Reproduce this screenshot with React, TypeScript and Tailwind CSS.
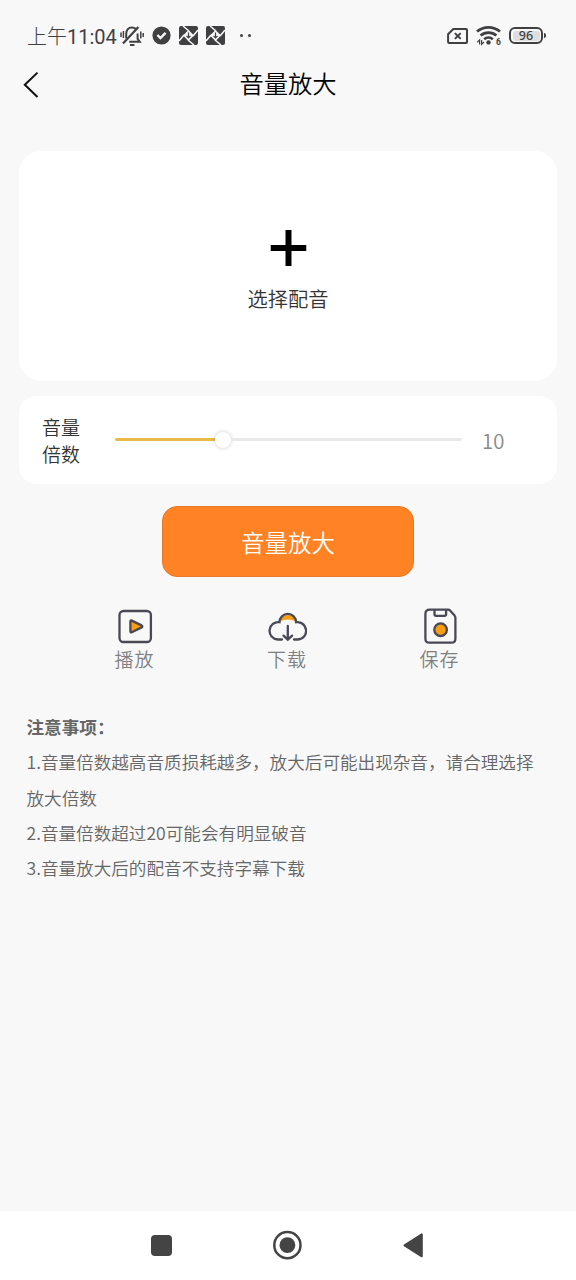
import React from "react";

const INK = "#404043";

function MutedBell() {
  return (
    <svg className="ml-[4px] h-[22px] w-[24px]" viewBox="0 0 24 22" fill="none" stroke={INK} strokeWidth="2">
      <path d="M6.2 13.6V9C6.2 5.2 8.5 2.4 12 2.4c2 0 3.5.8 4.5 2.2M17.6 8.6v5.2l2.2 3H9.2" />
      <path d="M3 18.6 18.4 2" strokeWidth="2.2" />
      <path d="M10 20h4.4" />
      <path d="M1 7.5v4.5M3.4 6v7M20.8 6.5v7M23.2 8v4" strokeWidth="1.5" />
    </svg>
  );
}

function CheckBadge() {
  return (
    <svg className="ml-[8px] h-[19px] w-[19px]" viewBox="0 0 19 19">
      <circle cx="9.5" cy="9.5" r="9.1" fill={INK} />
      <path d="m5.4 9 3 3 5.2-5.2" fill="none" stroke="#f8f8f8" strokeWidth="2.4" />
    </svg>
  );
}

function DiamondBadge() {
  return (
    <svg className="h-[19px] w-[19px]" viewBox="0 0 19 19">
      <rect width="19" height="19" rx="2" fill={INK} />
      <path d="M9.5 4 15 9.5 9.5 15 4 9.5Z" fill="#f8f8f8" />
      <path d="M4 0 10 5M19 4l-5 6M15 19l-6-5M0 15l5-6" fill="none" stroke="#f8f8f8" strokeWidth="1.5" />
      <path d="M9.5 6.6v5.2M7.5 9.8l2 2 2-2" fill="none" stroke={INK} strokeWidth="1.2" />
    </svg>
  );
}

function StatusBar() {
  return (
    <div className="flex h-[58px] items-center pt-[13px] pr-[30px] pl-[27px] text-[#404043]">
      <span className="font-['Noto_Sans_CJK_SC',sans-serif] text-[20px] font-light leading-[24px]">上午</span>
      <span className="w-[49px] pt-[2px] font-[Roboto,sans-serif] text-[20px] font-normal leading-[24px]">11:04</span>
      <MutedBell />
      <CheckBadge />
      <div className="ml-[8px] flex gap-[8px]">
        <DiamondBadge />
        <DiamondBadge />
      </div>
      <div className="ml-[15px] flex gap-[5px]">
        <i className="size-[3px] rounded-full bg-[#404043]" />
        <i className="size-[3px] rounded-full bg-[#404043]" />
      </div>
      <div className="ml-auto flex items-center">
        <svg className="h-[18px] w-[22px]" viewBox="0 0 22 18" fill="none" stroke={INK} strokeWidth="2">
          <path d="M6.3 2H19Q20 2 20 3V15Q20 16 19 16H2.1Q1.1 16 1.1 15V7.2Z" />
          <path d="m7.9 6.1 5.8 5.8M13.7 6.1 7.9 11.9" />
        </svg>
        <svg className="ml-[7px] h-[21px] w-[26px]" viewBox="0 0 26 21" fill="none" stroke={INK} strokeWidth="2.7">
          <path d="M1 6.6a17.5 17.5 0 0 1 23 0M4.6 10.6a12 12 0 0 1 15.8 0M8.2 14.3a6.6 6.6 0 0 1 8.6 0" />
          <circle cx="12.5" cy="17.4" r="2.2" fill={INK} stroke="none" />
          <path d="M3.6 19.6V15L1.2 17.4M5.6 15v4.4L8 17" strokeWidth="1.2" />
          <text x="20" y="20.2" fill={INK} stroke="none" className="font-[Roboto,sans-serif] text-[8.5px] font-bold">6</text>
        </svg>
        <div className="ml-[7px] flex h-[17px] w-[34px] items-center rounded-[6px] border-2 border-[#404043] p-[1.5px]">
          <div className="flex h-full w-full items-center justify-center rounded-[3px] bg-[#dedede] pt-px font-['Noto_Sans',sans-serif] text-[12.5px] font-medium leading-none">96</div>
        </div>
        <i className="ml-px h-[5px] w-[2px] rounded-r bg-[#404043]" />
      </div>
    </div>
  );
}

function PlayIcon() {
  return (
    <svg className="h-[37px] w-[40px]" viewBox="0 0 40 37" stroke="#494955" strokeWidth="2.3" strokeLinejoin="round">
      <rect x="4.5" y="4" width="31.4" height="31" rx="4" fill="none" />
      <path d="M15.4 14.5v9.8q0 1.6 1.4.9l9.8-4.8q1.6-1 0-2l-9.8-4.8q-1.4-.7-1.4.9Z" fill="#f99d13" />
    </svg>
  );
}

function DownloadIcon() {
  return (
    <svg className="h-[37px] w-[40px]" viewBox="0 0 40 37" fill="none" stroke="#494955" strokeWidth="2.3" strokeLinecap="round">
      <path d="M12.8 14.9a8.1 8.1 0 0 1 16 0q-3-2.3-8-2.3t-8 2.3Z" fill="#f99d13" stroke="none" />
      <path d="M15 32.5H10.8a8.7 8.7 0 1 1 1.7-17.3 8.3 8.3 0 0 1 16.6 0 8.7 8.7 0 1 1 1.3 17.3H27" />
      <path d="M20.8 18.8v13.7M16.5 28.6l4.3 4.1 4.3-4.1" />
    </svg>
  );
}

function SaveIcon() {
  return (
    <svg className="h-[37px] w-[40px]" viewBox="0 0 40 37" fill="none" stroke="#494955" strokeWidth="2.3" strokeLinejoin="round">
      <path d="M9.8 2.6H28.2q1 0 1.8.8l4.6 5.2q.8 1 .8 2.2v20.9q0 4-4 4H9.4q-4 0-4-4V7q0-4.4 4.4-4.4Z" />
      <path d="M14.5 2.9v4.4q0 1.6 1.6 1.6h8.4q1.6 0 1.6-1.6V2.9" />
      <circle cx="20.6" cy="22.7" r="6.3" fill="#f99d13" />
    </svg>
  );
}

const actions = [
  { label: "播放", Icon: PlayIcon },
  { label: "下载", Icon: DownloadIcon },
  { label: "保存", Icon: SaveIcon },
];

export default function App() {
  return (
    <div className="flex h-[1280px] w-[576px] flex-col overflow-hidden bg-[#f8f8f8] font-['Noto_Sans_CJK_SC',sans-serif] font-[350]">
      <StatusBar />
      <header className="grid h-[53px] grid-cols-[60px_1fr_60px] items-center">
        <svg className="ml-[22px] h-[28px] w-[18px]" viewBox="0 0 18 28" fill="none" stroke="#111" strokeWidth="2">
          <path d="M15.5 1.6 2.8 13.8 15.5 26" />
        </svg>
        <h1 className="-mt-[3px] text-center text-[24.3px] leading-[36px] font-[350] text-black">音量放大</h1>
      </header>

      <section className="mx-[19px] mt-[39.5px] flex h-[230px] flex-col items-center rounded-[22px] bg-white pt-[79px]">
        <svg className="h-[36px] w-[36px] translate-x-[0.5px]" viewBox="0 0 36 36" stroke="#000" strokeWidth="6">
          <path d="M18 0v36M0 18h36" />
        </svg>
        <span className="mt-[17px] text-[20.3px] leading-[30px] text-[#333]">选择配音</span>
      </section>

      <section className="mx-[19px] mt-[15.5px] flex h-[88px] items-center rounded-[18px] bg-white pl-[23px]">
        <div className="w-[40px] text-[19px] leading-[27px] text-[#333]">
          音量
          <br />
          倍数
        </div>
        <div className="-mt-px ml-[33px] flex w-[347px] items-center">
          <div className="h-[3px] w-[100px] rounded-l-full bg-[#e9b949]" />
          <div className="size-[16px] rounded-full bg-white shadow-[0_0_4px_rgba(0,0,0,0.22)]" />
          <div className="h-[3px] flex-1 rounded-r-full bg-[#e9e9e9]" />
        </div>
        <span className="ml-[20px] text-[20.3px] leading-[30px] text-[#888]">10</span>
      </section>

      <button className="mt-[22px] h-[71px] w-[252px] self-center rounded-[15px] border border-[#e47929] bg-[#ff8225] text-[23.4px] leading-[36px] font-[350] text-white">
        音量放大
      </button>

      <div className="mt-[30px] flex justify-between pr-[116px] pl-[114px]">
        {actions.map(({ label, Icon }) => (
          <div key={label} className="flex w-[41px] flex-col items-center">
            <Icon />
            <span className="whitespace-nowrap text-[19px] leading-[30px] tracking-[1px] text-[#808080]">{label}</span>
          </div>
        ))}
      </div>

      <div className="mt-[35px] pr-[30px] pl-[26.5px] text-[17.6px] leading-[35.3px] text-[#666]">
        <p className="font-bold">注意事项：</p>
        <p>
          1.音量倍数越高音质损耗越多，放大后可能出现杂音，请合理选择
          <br />
          放大倍数
        </p>
        <p>2.音量倍数超过20可能会有明显破音</p>
        <p>3.音量放大后的配音不支持字幕下载</p>
      </div>

      <nav className="mt-auto flex h-[69px] items-center justify-between bg-white pr-[152.5px] pb-px pl-[151px]">
        <div className="size-[21px] rounded-[4px] bg-[#444]" />
        <svg className="h-[30px] w-[30px]" viewBox="0 0 30 30">
          <circle cx="15.4" cy="15.2" r="13.1" fill="none" stroke="#444" strokeWidth="2.5" />
          <circle cx="15.4" cy="15.2" r="7.9" fill="#444" />
        </svg>
        <svg className="h-[26px] w-[21px]" viewBox="0 0 21 26">
          <path d="M1.5 13.3 18.8 2.3v22Z" fill="#444" stroke="#444" strokeWidth="2" strokeLinejoin="round" />
        </svg>
      </nav>
    </div>
  );
}
